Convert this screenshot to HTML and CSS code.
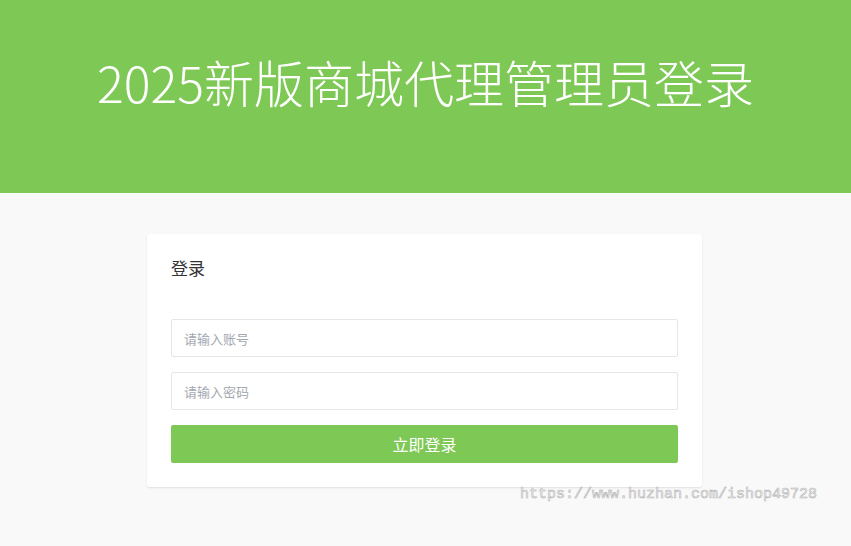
FILE: index.html
```html
<!DOCTYPE html>
<html lang="zh">
<head>
<meta charset="utf-8">
<link rel="stylesheet" href="styles.css">
</head>
<body>
<header class="banner">
  <h1 class="banner-title">2025新版商城代理管理员登录</h1>
</header>
<main class="main">
  <section class="card">
    <h2 class="card-title">登录</h2>
    <form class="form">
      <input class="field" type="text" placeholder="请输入账号">
      <input class="field" type="password" placeholder="请输入密码">
      <button class="submit" type="button">立即登录</button>
    </form>
  </section>
</main>
<div class="watermark">https://www.huzhan.com/ishop49728</div>
</body>
</html>
```
FILE: styles.css
```css
html, body {
  margin: 0;
  padding: 0;
}
body {
  background: #f9f9f9;
  font-family: "Noto Sans CJK SC", "Noto Sans", sans-serif;
  height: 546px;
  overflow: hidden;
  position: relative;
}
.banner {
  background: #7ec855;
  height: 193px;
  display: flex;
  align-items: center;
  justify-content: center;
}
.banner-title {
  margin: 0;
  color: #fff;
  font-size: 50px;
  font-weight: 300;
  letter-spacing: 0;
  line-height: 1;
  padding-bottom: 31px;
}
.main {
  display: flex;
  justify-content: center;
  padding-top: 41px;
}
.card {
  width: 555px;
  margin-left: -2px;
  background: #fff;
  border-radius: 3px;
  box-shadow: 0 1px 2px rgba(0,0,0,0.1);
  padding: 22px 24px 24px;
  box-sizing: border-box;
}
.card-title {
  margin: 0;
  font-size: 17px;
  font-weight: 400;
  color: #333;
  line-height: 24px;
}
.form {
  display: flex;
  flex-direction: column;
  gap: 15px;
  margin-top: 39px;
}
.field {
  height: 38px;
  box-sizing: border-box;
  border: 1px solid #e6e6e6;
  border-radius: 2px;
  padding: 0 12px;
  font-family: inherit;
  font-size: 13px;
  color: #333;
  outline: none;
  margin: 0;
}
.field::placeholder {
  color: #a3a8b0;
}
.submit {
  height: 38px;
  border: 0;
  border-radius: 2px;
  background: #7ec855;
  color: #fff;
  font-family: inherit;
  font-size: 16px;
  margin: 0;
  padding: 0;
}
.watermark {
  position: absolute;
  left: 520px;
  top: 486px;
  font-family: "Liberation Mono", monospace;
  font-size: 15px;
  color: #fafafa;
  -webkit-text-stroke: 0.6px #b4b4b4;
  letter-spacing: 0;
}
```
